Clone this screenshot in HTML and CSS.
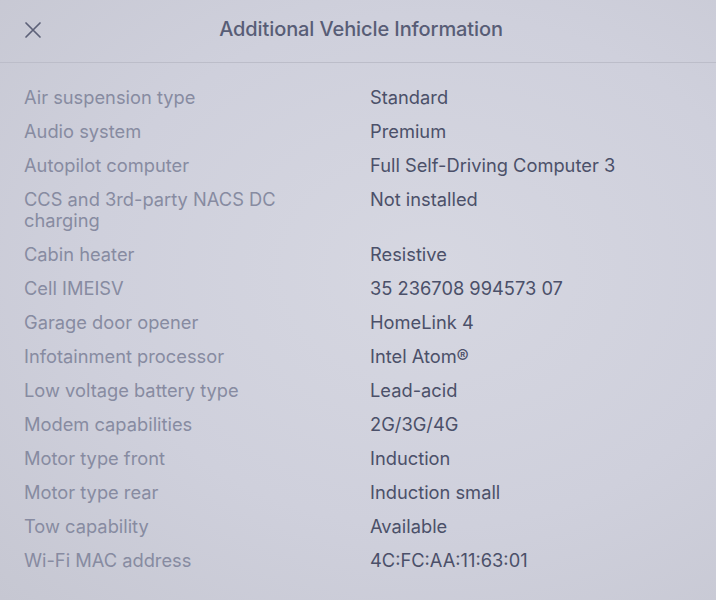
FILE: index.html
```html
<!DOCTYPE html>
<html lang="en">
<head>
    <meta charset="UTF-8">
    <meta name="viewport" content="width=device-width, initial-scale=1.0">
    <title>Additional Vehicle Information</title>
    <link rel="stylesheet" href="styles.css">
</head>
<body>

<div class="panel">
    <div class="header">
        <button class="close-btn" aria-label="Close">
            <svg width="18" height="18" viewBox="0 0 18 18">
                <path d="M2 2 L16 16 M16 2 L2 16" stroke="#5d6178" stroke-width="1.7" fill="none" stroke-linecap="round"/>
            </svg>
        </button>
        <h1>Additional Vehicle Information</h1>
    </div>

    <div class="info-list">
        <div class="row"><div class="label">Air suspension type</div><div class="value">Standard</div></div>
        <div class="row"><div class="label">Audio system</div><div class="value">Premium</div></div>
        <div class="row"><div class="label">Autopilot computer</div><div class="value">Full Self-Driving Computer 3</div></div>
        <div class="row"><div class="label">CCS and 3rd-party NACS DC charging</div><div class="value">Not installed</div></div>
        <div class="row"><div class="label">Cabin heater</div><div class="value">Resistive</div></div>
        <div class="row"><div class="label">Cell IMEISV</div><div class="value">35 236708 994573 07</div></div>
        <div class="row"><div class="label">Garage door opener</div><div class="value">HomeLink 4</div></div>
        <div class="row"><div class="label">Infotainment processor</div><div class="value">Intel Atom®</div></div>
        <div class="row"><div class="label">Low voltage battery type</div><div class="value">Lead-acid</div></div>
        <div class="row"><div class="label">Modem capabilities</div><div class="value">2G/3G/4G</div></div>
        <div class="row"><div class="label">Motor type front</div><div class="value">Induction</div></div>
        <div class="row"><div class="label">Motor type rear</div><div class="value">Induction small</div></div>
        <div class="row"><div class="label">Tow capability</div><div class="value">Available</div></div>
        <div class="row"><div class="label">Wi-Fi MAC address</div><div class="value">4C:FC:AA:11:63:01</div></div>
    </div>
</div>

</body>
</html>
```

FILE: styles.css
```css
body {
    margin: 0;
    font-family: Inter, "Open Sans", sans-serif;
    background: #cfd0dc;
}
.panel {
    height: 600px;
    background: radial-gradient(ellipse at 60% 45%, #d6d7e1 0%, #cfd0dc 55%, #c6c7d2 100%);
    overflow: hidden;
}
.header {
    height: 62px;
    display: flex;
    align-items: center;
    justify-content: center;
    position: relative;
    border-bottom: 1px solid #bcbdc9;
}
.close-btn {
    position: absolute;
    left: 21px;
    top: 18px;
    width: 24px;
    height: 24px;
    padding: 3px;
    border: none;
    background: none;
}
h1 {
    margin: 0 0 4px 6px;
    font-size: 20px;
    font-weight: 500;
    color: #585d76;
    letter-spacing: -0.1px;
}
.info-list {
    padding: 24px 0 0 24px;
    display: flex;
    flex-direction: column;
    gap: 13px;
}
.row {
    display: flex;
    font-size: 18.3px;
    line-height: 21px;
}
.label {
    width: 266px;
    margin-right: 80px;
    color: #878ba1;
}
.value {
    color: #4b5069;
}
```
